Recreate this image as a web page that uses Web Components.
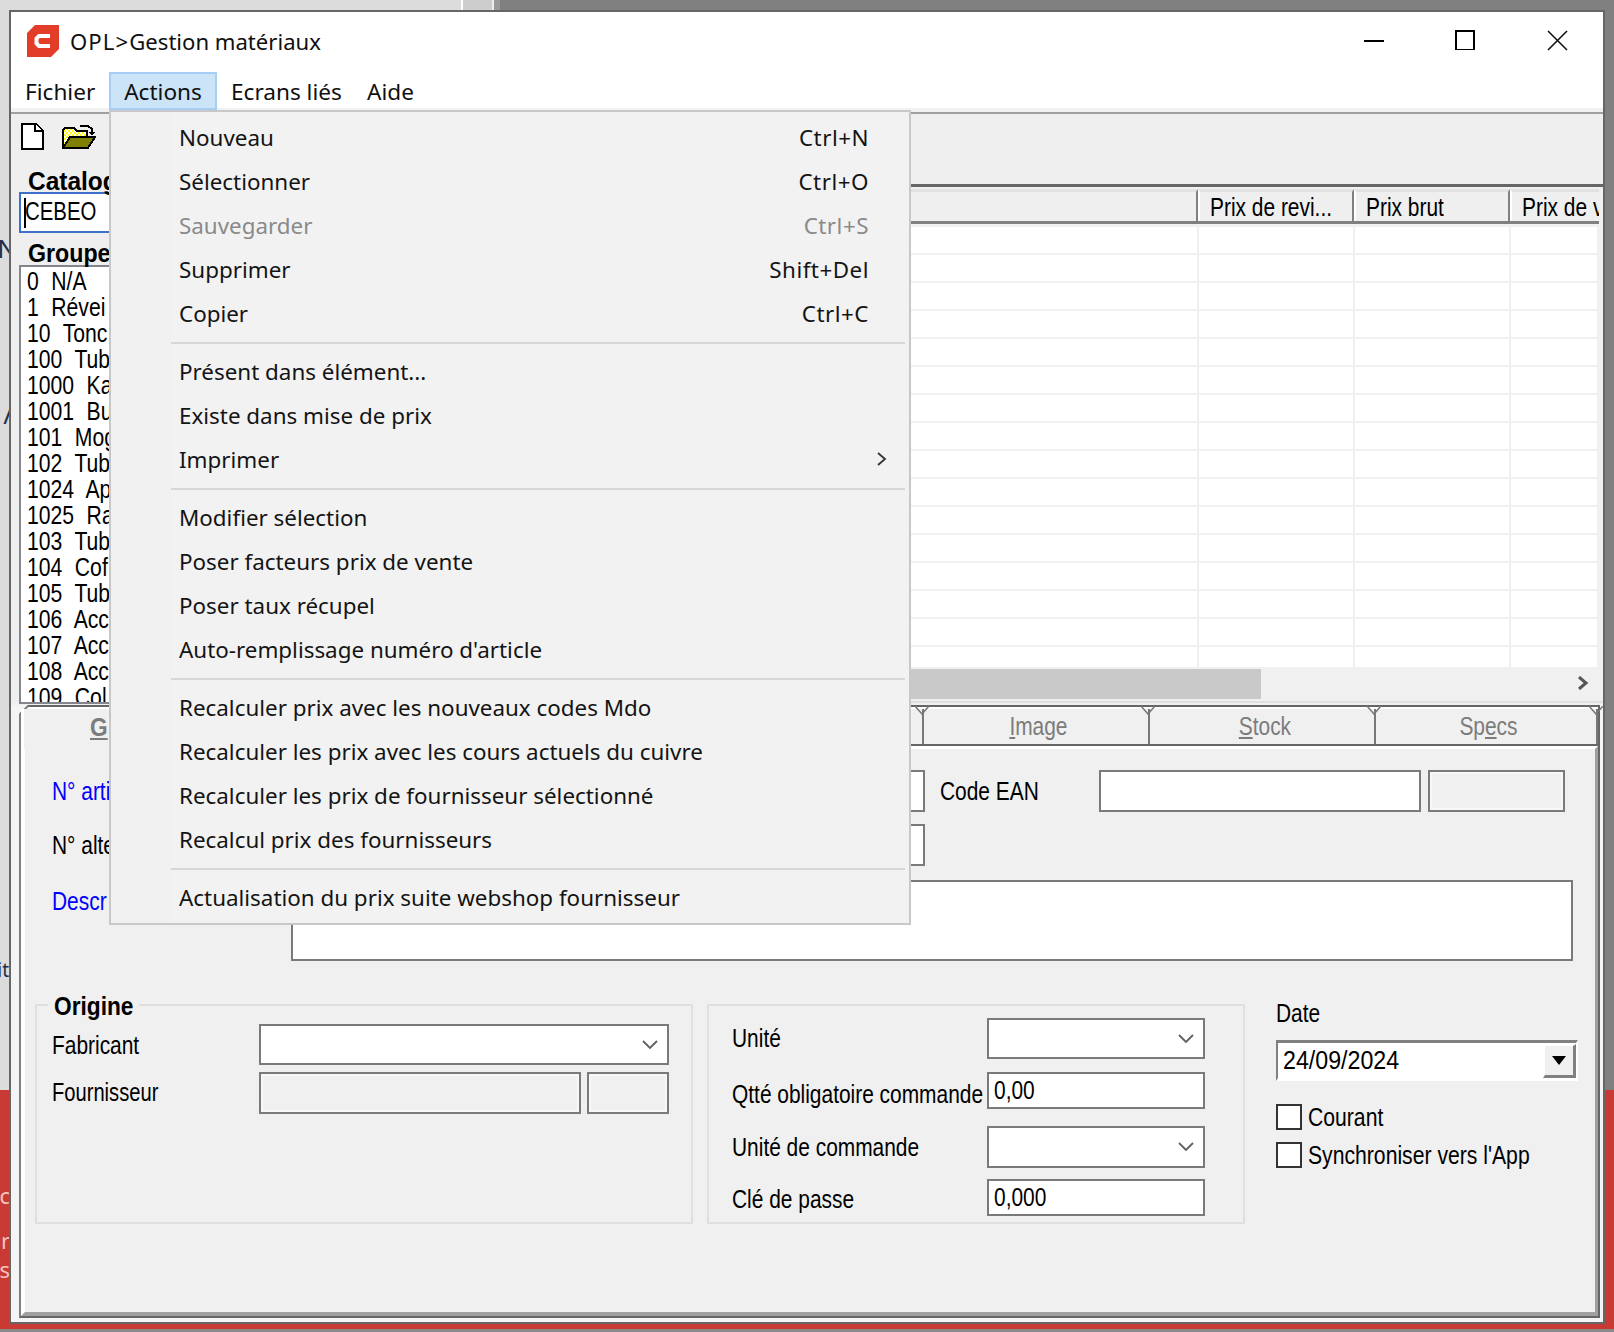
<!DOCTYPE html>
<html lang="fr">
<head>
<meta charset="utf-8">
<title>OPL>Gestion matériaux</title>
<style>
  html, body { margin: 0; padding: 0; }
  body { width: 1614px; height: 1332px; overflow: hidden; font-family: "Liberation Sans", Arial, sans-serif; font-size: 25.5px; color: #000; }
</style>
</head>
<body>
<opl-desktop>
  <opl-window>
    <opl-titlebar slot="top"></opl-titlebar>
    <opl-menubar slot="top"></opl-menubar>
    <opl-workspace slot="top"></opl-workspace>
    <opl-tabpanel slot="top"></opl-tabpanel>
    <opl-menu slot="overlay">
      <opl-menu-item shortcut="Ctrl+N">Nouveau</opl-menu-item>
      <opl-menu-item shortcut="Ctrl+O">Sélectionner</opl-menu-item>
      <opl-menu-item shortcut="Ctrl+S" disabled>Sauvegarder</opl-menu-item>
      <opl-menu-item shortcut="Shift+Del">Supprimer</opl-menu-item>
      <opl-menu-item shortcut="Ctrl+C">Copier</opl-menu-item>
      <opl-menu-sep></opl-menu-sep>
      <opl-menu-item>Présent dans élément...</opl-menu-item>
      <opl-menu-item>Existe dans mise de prix</opl-menu-item>
      <opl-menu-item submenu>Imprimer</opl-menu-item>
      <opl-menu-sep></opl-menu-sep>
      <opl-menu-item>Modifier sélection</opl-menu-item>
      <opl-menu-item>Poser facteurs prix de vente</opl-menu-item>
      <opl-menu-item>Poser taux récupel</opl-menu-item>
      <opl-menu-item>Auto-remplissage numéro d'article</opl-menu-item>
      <opl-menu-sep></opl-menu-sep>
      <opl-menu-item>Recalculer prix avec les nouveaux codes Mdo</opl-menu-item>
      <opl-menu-item>Recalculer les prix avec les cours actuels du cuivre</opl-menu-item>
      <opl-menu-item>Recalculer les prix de fournisseur sélectionné</opl-menu-item>
      <opl-menu-item>Recalcul prix des fournisseurs</opl-menu-item>
      <opl-menu-sep></opl-menu-sep>
      <opl-menu-item>Actualisation du prix suite webshop fournisseur</opl-menu-item>
    </opl-menu>
  </opl-window>
</opl-desktop>

<script>
const MENU_FONT = '"Noto Sans", "Open Sans", sans-serif';

// Base: every element renders once into an open shadow root
class OplElement extends HTMLElement {
  constructor() {
    super();
    this.attachShadow({ mode: 'open' });
  }
  connectedCallback() {
    this.shadowRoot.innerHTML = this.render();
  }
}

// Squeezed label: the old dialog font is much narrower than Liberation Sans
class OplN extends OplElement {
  render() {
    return `
      <style>
        :host { display: inline-block; white-space: nowrap; transform: scaleX(var(--sx, .82)); transform-origin: var(--o, 0) 50%; }
      </style>
      <slot></slot>`;
  }
}

class OplDesktop extends OplElement {
  render() {
    return `
      <style>
        :host { display: block; position: relative; width: 1614px; height: 1332px; overflow: hidden;
          background: linear-gradient(#808080 1090px, #c83a33 1090px, #c83a33 1329px, #8a8a8a 1329px); }
        .strip { position: absolute; left: 0; top: 0; height: 10px; }
        .a { width: 461px; background: #dcdcdc; }
        .b { left: 461px; width: 29px; background: #cdcdcd; border-left: 2px solid #fff; border-right: 2px solid #eee; }
        .c { left: 494px; width: 6px; background: #999; }
        .left { position: absolute; left: 0; top: 0; width: 9px; height: 1090px; background: #dcdcdc; overflow: hidden; }
        .bit { position: absolute; right: -8px; font: 26px ${MENU_FONT}; color: #1f2f48; line-height: 30px; }
        .red { position: absolute; left: 0; top: 1090px; width: 9px; height: 240px; overflow: hidden; }
        .red span { position: absolute; right: -1px; font: 22px ${MENU_FONT}; color: #f1c4c0; line-height: 26px; }
      </style>
      <div class="strip a"></div><div class="strip b"></div><div class="strip c"></div>
      <div class="left">
        <span class="bit" style="top:233px">N</span>
        <span class="bit" style="top:399px;right:-4px">/</span>
        <span class="bit" style="top:955px;right:0;font-size:19px">it</span>
      </div>
      <div class="red">
        <span style="top:92px">c</span>
        <span style="top:137px">r</span>
        <span style="top:166px">s</span>
      </div>
      <slot></slot>`;
  }
}

class OplWindow extends OplElement {
  render() {
    return `
      <style>
        :host { display: block; position: absolute; left: 9px; top: 10px; width: 1596px; height: 1314px; box-sizing: border-box;
          border: 2px solid #666; background: #f4f4f4; }
        .top { display: flex; flex-direction: column; height: 100%; }
        ::slotted(opl-menu) { position: absolute; left: 98px; top: 98px; }
      </style>
      <div class="top"><slot name="top"></slot></div>
      <slot name="overlay"></slot>`;
  }
}

class OplTitlebar extends OplElement {
  render() {
    return `
      <style>
        :host { display: flex; align-items: center; height: 60px; flex: none; background: #fff; padding-left: 16px; }
        .logo { display: block; width: 32px; height: 32px; margin-top: -2px; }
        .cap { margin-left: 11px; font: 22.1px ${MENU_FONT}; color: #101010; margin-top: -2px; white-space: nowrap; }
        .cap span { letter-spacing: 1.1px; }
        .ctl { display: flex; margin-left: auto; }
        .ctl div { display: flex; align-items: center; justify-content: center; height: 58px; margin-top: -4px; }
      </style>
      <svg class="logo" viewBox="0 0 32 32">
        <path d="M8 0H32V24L24 32H0V8Z" fill="#e23d28"/>
        <path d="M23 11H12L9.5 13.5V18.5L12 21H23" fill="none" stroke="#fff" stroke-width="4"/>
      </svg>
      <div class="cap"><span>OPL&gt;</span>Gestion matériaux</div>
      <div class="ctl">
        <div style="width:90px"><svg width="20" height="20"><rect x="0" y="10" width="20" height="2"/></svg></div>
        <div style="width:92px"><svg width="20" height="20"><rect x="1" y="1" width="18" height="19" fill="none" stroke="#000" stroke-width="2"/></svg></div>
        <div style="width:92px"><svg width="21" height="21"><path d="M1 1L20 20M20 1L1 20" stroke="#111" stroke-width="1.6"/></svg></div>
      </div>`;
  }
}

class OplMenubar extends OplElement {
  render() {
    return `
      <style>
        :host { display: block; flex: none; height: 40px; box-sizing: border-box; background: #fff; border-bottom: 4px solid #f2f2f2; font: 22.6px ${MENU_FONT}; color: #101010; }
        nav { display: flex; height: 38px; }
        span { display: flex; align-items: center; height: 38px; box-sizing: border-box; padding: 0 12px 0 12px; white-space: nowrap; }
        span.first { padding-left: 14px; padding-right: 14px; width: 98px; }
        span.on { background: #cce4f7; border: 2px solid #a6cef5; padding: 0 10px; width: 108px; justify-content: center; }
        span.e { margin-left: 2px; width: 136px; }
      </style>
      <nav>
        <span class="first">Fichier</span>
        <span class="on">Actions</span>
        <span class="e">Ecrans liés</span>
        <span>Aide</span>
      </nav>`;
  }
}

class OplWorkspace extends OplElement {
  render() {
    return `
      <style>
        :host { display: flex; flex: none; height: 591px; border-top: 2px solid #a0a0a0; background: #efefef; }
        opl-groups { flex: none; width: 110px; }
        .right { flex: 1; min-width: 0; display: flex; flex-direction: column; padding-top: 70px; box-sizing: border-box; }
      </style>
      <opl-groups></opl-groups>
      <div class="right"><opl-grid></opl-grid></div>`;
  }
}

class OplGroups extends OplElement {
  render() {
    const groups = ['0 N/A', '1 Révei', '10 Tonc', '100 Tub', '1000 Ka', '1001 Bu', '101 Mog', '102 Tub',
      '1024 Ap', '1025 Ra', '103 Tub', '104 Cof', '105 Tub', '106 Acc', '107 Acc', '108 Acc', '109 Col'];
    return `
      <style>
        :host { display: block; padding-left: 8px; box-sizing: border-box; overflow: hidden; }
        .tools { display: flex; height: 52px; padding: 8px 0 0 1px; box-sizing: border-box; }
        .tools svg { display: block; shape-rendering: crispEdges; }
        .tools svg + svg { margin-left: 18px; }
        .lbl { height: 26px; line-height: 30px; font-weight: 700; padding-left: 9px; white-space: nowrap; --sx: .96; }
        .lbl.g { height: 32px; line-height: 40px; --sx: .91; }
        .cat { height: 41px; box-sizing: border-box; border: 2px solid #3d70c8; border-right: 0; background: #fff; display: flex; align-items: center; padding: 0 0 2px 3px; white-space: nowrap; --sx: .8; overflow: hidden; }
        .cat i { display: block; flex: none; width: 2px; height: 30px; background: #000; margin-right: -1px; margin-top: 2px; }
        ul { list-style: none; margin: 0; padding: 1px 0 0 6px; height: 439px; box-sizing: border-box; overflow: hidden; background: #fff; border: 2px solid #83878d; border-right: 0; }
        li { height: 26px; line-height: 27px; word-spacing: 8px; white-space: nowrap; --sx: .83; }
      </style>
      <div class="tools">
        <svg width="24" height="28" viewBox="0 0 24 28">
          <path d="M1.5 1.5H16L22.5 8V26.5H1.5Z" fill="#fff" stroke="#000" stroke-width="2"/>
          <path d="M15 1V9H23" fill="none" stroke="#000" stroke-width="2"/>
        </svg>
        <svg width="34" height="28" viewBox="0 0 34 28">
          <defs><pattern id="dith" width="4" height="4" patternUnits="userSpaceOnUse">
            <rect width="4" height="4" fill="#ffff00"/><rect width="2" height="2" fill="#fff"/><rect x="2" y="2" width="2" height="2" fill="#fff"/>
          </pattern></defs>
          <path d="M1 26V8L3 6H12L15 9H25V16" fill="url(#dith)" stroke="#000" stroke-width="2"/>
          <path d="M1 26L8 15H33L26 26Z" fill="#808000" stroke="#000" stroke-width="2"/>
          <path d="M18 4H26L30 7V11" fill="none" stroke="#000" stroke-width="2"/>
          <path d="M27 10H33L30 14Z" fill="#000"/>
        </svg>
      </div>
      <div class="lbl"><opl-n>Catalog</opl-n></div>
      <div class="cat"><i></i><opl-n>CEBEO</opl-n></div>
      <div class="lbl g"><opl-n>Groupe</opl-n></div>
      <ul>${groups.map(g => `<li><opl-n>${g}</opl-n></li>`).join('')}</ul>`;
  }
}

class OplGrid extends OplElement {
  render() {
    const cells = `<b></b><b></b><b></b><b></b>`;
    return `
      <style>
        :host { display: block; flex: 1; border-top: 3px solid #666; background: #f0f0f0; padding-top: 2px; position: relative; }
        .head { display: grid; grid-template-columns: 1077px 156px 156px 1fr; height: 32px; margin-right: 4px; border-bottom: 3px solid #808080; }
        .head div { box-sizing: border-box; height: 32px; background: #efefef; border-top: 3px solid #e2e2e2; border-left: 2px solid #fff; border-right: 2px solid #808080; padding-left: 10px; line-height: 31px; white-space: nowrap; overflow: hidden; }
        .head div:last-child { border-right: 0; }
        .rows { height: 440px; margin-right: 4px; margin-top: 3px; overflow: hidden; background: #fff; }
        .row { display: grid; grid-template-columns: 1078px 156px 156px 1fr; height: 28px; box-sizing: border-box; border-bottom: 2px solid #f0f0f0; }
        .row b { display: block; border-right: 2px solid #f0f0f0; }
        .scroll { position: relative; height: 30px; margin: 2px 4px 0 0; background: #f0f0f0; }
        .thumb { position: absolute; left: 0; top: 0; bottom: 0; width: 1140px; background: #c9c9c9; }
        .scroll svg { position: absolute; right: 10px; top: 7px; }
        .foot { height: 2px; margin-top: 2px; background: #e0e0e0; }
      </style>
      <div class="head"><div></div><div><opl-n>Prix de revi...</opl-n></div><div><opl-n>Prix brut</opl-n></div><div><opl-n>Prix de v</opl-n></div></div>
      <div class="rows">${Array.from({ length: 16 }, () => `<div class="row">${cells}</div>`).join('')}</div>
      <div class="scroll"><div class="thumb"></div>
        <svg width="12" height="14"><path d="M2 1L9 7L2 13" fill="none" stroke="#555" stroke-width="3"/></svg>
      </div>
      <div class="foot"></div>`;
  }
}

class OplTabpanel extends OplElement {
  render() {
    const tabs = ['', '', '', 'Image', 'Stock', 'Specs'];
    const under = { Image: 'I', Stock: 'S', Specs: 'e' };
    const label = t => t.replace(under[t], `<u>${under[t]}</u>`);
    return `
      <style>
        :host { display: flex; flex-direction: column; flex: none; margin-left: 8px; width: 1581px; height: 613px; box-sizing: border-box; position: relative;
          border-top: 2px solid #666; border-left: 2px solid #808080; border-right: 2px solid #666; border-bottom: 2px solid #666; background: #f0f0f0; }
        .corner { position: absolute; left: -2px; top: -2px; }
        .tabs { display: grid; grid-template-columns: 3px 225px 225px 225px 225px 226px 226px 1fr; height: 35px; flex: none; border-bottom: 2px solid #666; background: #f0f0f0; border-top: 2px solid #fff; }
        .edge { background: #fff; margin-bottom: -5px; position: relative; }
        .tab { display: flex; align-items: center; justify-content: center; color: #7c7c7c; border-right: 2px solid #777; position: relative; --o: 50%; padding-left: 5px; }
        .tab svg { position: absolute; right: -8px; top: -3px; }
        .gen { display: block; font-weight: 700; padding-left: 66px; line-height: 36px; color: #7c7c7c; --sx: .89; background: #f0f0f0; margin-bottom: -5px; position: relative; }
        .body { flex: 1; border-left: 4px solid #fff; border-top: 3px solid #fff; border-right: 3px solid #a0a0a0; border-bottom: 4px solid #a0a0a0; min-height: 0; }
        opl-general { height: 100%; }
      </style>
      <svg class="corner" width="10" height="10"><path d="M0 0H9L0 9Z" fill="#f4f4f4"/><path d="M9 1L1 9" stroke="#808080" stroke-width="2"/></svg>
      <div class="tabs">
        <span class="edge"></span>
        <div class="gen"><opl-n><u>G</u></opl-n></div>
        ${tabs.map(t => `<div class="tab">${t ? `<opl-n>${label(t)}</opl-n>` : ''}<svg width="16" height="9"><path d="M1 0L8 8L15 0" fill="none" stroke="#777" stroke-width="1.5"/></svg></div>`).join('')}
      </div>
      <div class="body"><opl-general></opl-general></div>`;
  }
}

class OplInput extends OplElement {
  render() {
    const combo = this.hasAttribute('combo');
    const value = this.getAttribute('value');
    return `
      <style>
        :host { display: flex; align-items: center; box-sizing: border-box; border: 2px solid #7a7a7a; background: #fff; padding-left: 5px; height: 41px; position: relative; }
        :host([disabled]) { background: #f0f0f0; box-shadow: inset 0 0 0 2px #f8f8f8; }
        svg { margin-left: auto; margin-right: 9px; }
      </style>
      ${value ? `<opl-n>${value}</opl-n>` : ''}
      ${combo ? '<svg width="16" height="10"><path d="M1 1L8 8L15 1" fill="none" stroke="#606060" stroke-width="1.8"/></svg>' : ''}`;
  }
}

class OplGroup extends OplElement {
  render() {
    const legend = this.getAttribute('legend');
    return `
      <style>
        :host { display: block; position: relative; box-sizing: border-box; height: 220px; border: 2px solid #dfdfdf; }
        .legend { position: absolute; left: 11px; top: -15px; width: 91px; height: 30px; box-sizing: border-box; background: #f0f0f0; padding: 0 6px; font-weight: 700; line-height: 30px; --sx: .89; }
      </style>
      ${legend ? `<div class="legend"><opl-n>${legend}</opl-n></div>` : ''}
      <slot></slot>`;
  }
}

class OplCheck extends OplElement {
  render() {
    return `
      <style>
        :host { display: flex; align-items: center; height: 26px; --sx: .83; }
        i { display: block; width: 26px; height: 26px; box-sizing: border-box; border: 2px solid #333; background: #fff; margin-right: 6px; flex: none; }
      </style>
      <i></i><opl-n><slot></slot></opl-n>`;
  }
}

class OplDate extends OplElement {
  render() {
    return `
      <style>
        :host { display: flex; width: 302px; height: 41px; box-sizing: border-box; border-top: 3px solid #808080; border-left: 2px solid #808080; border-right: 2px solid #fff; border-bottom: 3px solid #fff; background: #fff; padding-left: 5px; align-items: center; position: relative; --sx: .91; }
        .btn { position: absolute; right: 0; top: 1px; bottom: 0; width: 33px; box-sizing: border-box; background: #f0f0f0; border-left: 2px solid #fff; border-top: 2px solid #fff; border-right: 3px solid #808080; border-bottom: 3px solid #808080; display: flex; align-items: center; justify-content: center; }
      </style>
      <opl-n>${this.getAttribute('value')}</opl-n>
      <div class="btn"><svg width="14" height="9"><path d="M0 0H14L7 9Z"/></svg></div>`;
  }
}

class OplGeneral extends OplElement {
  render() {
    return `
      <style>
        :host { display: block; padding-top: 21px; box-sizing: border-box; }
        .row { display: flex; align-items: center; padding-left: 27px; }
        .lab { width: 240px; flex: none; white-space: nowrap; }
        .blue { color: #0000ff; }
        .ean { width: 159px; flex: none; padding-left: 15px; }
        .row2 { margin-top: 12px; }
        .row3 { margin-top: 14px; align-items: flex-start; }
        .row3 .lab { margin-top: 7px; width: 239px; }
        .bottom { display: flex; margin-top: 43px; padding-left: 10px; }
        .o { width: 658px; }
        .o .g { display: grid; grid-template-columns: 207px 322px 6px 82px; grid-template-rows: 41px 42px; row-gap: 7px; padding: 18px 0 0 15px; align-items: center; }
        .o .g opl-input:first-of-type { grid-column: 2 / 5; }
        .o .a { margin-top: 2px; }
        .o .f { margin-top: -2px; --sx: .79; }
        .u { width: 538px; margin-left: 14px; }
        .u .g { display: grid; grid-template-columns: 255px 218px; grid-template-rows: 41px 50px 59px 48px; padding: 12px 0 0 23px; align-items: end; }
        .u .g > div { white-space: nowrap; align-self: end; }
        .d { margin-left: 31px; }
        .d .lab { height: 36px; line-height: 18px; }
        .d opl-check { margin-top: 23px; }
        .d opl-check + opl-check { margin-top: 12px; }
      </style>
      <div class="row">
        <div class="lab blue"><opl-n>N° arti</opl-n></div>
        <opl-input style="width:633px;height:42px"></opl-input>
        <div class="ean"><opl-n>Code EAN</opl-n></div>
        <opl-input style="width:322px;height:42px"></opl-input>
        <opl-input disabled style="width:137px;height:42px;margin-left:7px"></opl-input>
      </div>
      <div class="row row2">
        <div class="lab"><opl-n>N° alte</opl-n></div>
        <opl-input style="width:633px;height:42px"></opl-input>
      </div>
      <div class="row row3">
        <div class="lab blue"><opl-n>Descr</opl-n></div>
        <opl-input style="width:1282px;height:81px"></opl-input>
      </div>
      <div class="bottom">
        <opl-group class="o" legend="Origine">
          <div class="g">
            <div class="a"><opl-n>Fabricant</opl-n></div>
            <opl-input combo style="height:41px"></opl-input>
            <div class="f"><opl-n>Fournisseur</opl-n></div>
            <opl-input disabled style="height:42px"></opl-input>
            <span></span>
            <opl-input disabled style="height:42px"></opl-input>
          </div>
        </opl-group>
        <opl-group class="u">
          <div class="g">
            <div style="height:41px;line-height:41px"><opl-n>Unité</opl-n></div>
            <opl-input combo style="height:41px"></opl-input>
            <div style="height:37px;line-height:45px"><opl-n>Qtté obligatoire commande</opl-n></div>
            <opl-input value="0,00" style="height:37px"></opl-input>
            <div style="height:42px;line-height:42px"><opl-n>Unité de commande</opl-n></div>
            <opl-input combo style="height:42px"></opl-input>
            <div style="height:37px;line-height:41px"><opl-n>Clé de passe</opl-n></div>
            <opl-input value="0,000" style="height:37px"></opl-input>
          </div>
        </opl-group>
        <div class="d">
          <div class="lab"><opl-n>Date</opl-n></div>
          <opl-date value="24/09/2024"></opl-date>
          <opl-check>Courant</opl-check>
          <opl-check>Synchroniser vers l'App</opl-check>
        </div>
      </div>`;
  }
}

class OplMenu extends OplElement {
  render() {
    return `
      <style>
        :host { display: block; width: 802px; height: 815px; box-sizing: border-box; border: 2px solid #c8c8c8; padding-top: 4px;
          background: linear-gradient(90deg, #f0f0f0 60px, #f2f2f2 60px); font: 22.4px ${MENU_FONT}; color: #141414; }
      </style>
      <slot></slot>`;
  }
}

class OplMenuItem extends OplElement {
  render() {
    const shortcut = this.getAttribute('shortcut') || '';
    const arrow = this.hasAttribute('submenu')
      ? '<svg class="arr" width="10" height="16"><path d="M1 2L8 8L1 14" fill="none" stroke="#333" stroke-width="1.8"/></svg>'
      : '';
    return `
      <style>
        :host { display: grid; grid-template-columns: 1fr auto; align-items: center; height: 44px; box-sizing: border-box; padding: 0 40px 2px 68px; white-space: nowrap; }
        :host([disabled]) { color: #8a8a8a; }
        .arr { display: block; margin-left: 8px; margin-right: -18px; }
        .key { letter-spacing: .5px; }
      </style>
      <span><slot></slot></span>
      ${shortcut ? `<span class="key">${shortcut}</span>` : arrow}`;
  }
}

class OplMenuSep extends OplElement {
  render() {
    return `
      <style>
        :host { display: block; height: 2px; margin: 6px 4px 6px 60px; background: #d7d7d7; }
      </style>`;
  }
}

customElements.define('opl-n', OplN);
customElements.define('opl-desktop', OplDesktop);
customElements.define('opl-window', OplWindow);
customElements.define('opl-titlebar', OplTitlebar);
customElements.define('opl-menubar', OplMenubar);
customElements.define('opl-workspace', OplWorkspace);
customElements.define('opl-groups', OplGroups);
customElements.define('opl-grid', OplGrid);
customElements.define('opl-tabpanel', OplTabpanel);
customElements.define('opl-input', OplInput);
customElements.define('opl-group', OplGroup);
customElements.define('opl-check', OplCheck);
customElements.define('opl-date', OplDate);
customElements.define('opl-general', OplGeneral);
customElements.define('opl-menu', OplMenu);
customElements.define('opl-menu-item', OplMenuItem);
customElements.define('opl-menu-sep', OplMenuSep);
</script>
</body>
</html>
